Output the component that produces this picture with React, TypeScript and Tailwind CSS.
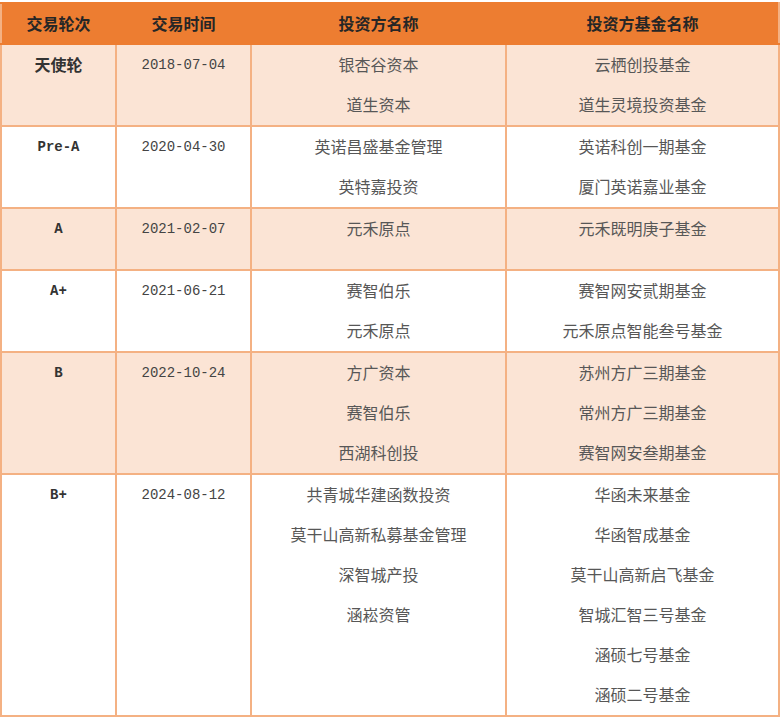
import React from "react";

type Round = {
  round: string;
  date: string;
  investors: string[];
  funds: string[];
};

const rounds: Round[] = [
  { round: "天使轮", date: "2018-07-04", investors: ["银杏谷资本", "道生资本"], funds: ["云栖创投基金", "道生灵境投资基金"] },
  { round: "Pre-A", date: "2020-04-30", investors: ["英诺昌盛基金管理", "英特嘉投资"], funds: ["英诺科创一期基金", "厦门英诺嘉业基金"] },
  { round: "A", date: "2021-02-07", investors: ["元禾原点"], funds: ["元禾既明庚子基金"] },
  { round: "A+", date: "2021-06-21", investors: ["赛智伯乐", "元禾原点"], funds: ["赛智网安贰期基金", "元禾原点智能叁号基金"] },
  { round: "B", date: "2022-10-24", investors: ["方广资本", "赛智伯乐", "西湖科创投"], funds: ["苏州方广三期基金", "常州方广三期基金", "赛智网安叁期基金"] },
  {
    round: "B+",
    date: "2024-08-12",
    investors: ["共青城华建函数投资", "莫干山高新私募基金管理", "深智城产投", "涵崧资管"],
    funds: ["华函未来基金", "华函智成基金", "莫干山高新启飞基金", "智城汇智三号基金", "涵硕七号基金", "涵硕二号基金"],
  },
];

const cjk = "font-['Noto_Sans_CJK_SC',sans-serif]";
const mono = "font-['Liberation_Mono','Noto_Sans_CJK_SC',monospace]";

function Lines({ items, latin = false }: { items: string[]; latin?: boolean }) {
  return (
    <div className="min-h-[60px]">
      {items.map((t) => (
        <div
          key={t}
          className={`flex h-10 items-center justify-center whitespace-nowrap ${latin ? "pt-[1px]" : "pb-[2px]"}`}
        >
          {t}
        </div>
      ))}
    </div>
  );
}

export default function App() {
  return (
    <div className="min-h-[720px] w-[784px] bg-white pt-[2px]">
      <table className="w-[778px] table-fixed border-collapse text-[16px] text-[#575757]">
        <colgroup>
          <col className="w-[115px]" />
          <col className="w-[135px]" />
          <col className="w-[255px]" />
          <col className="w-[273px]" />
        </colgroup>
        <thead>
          <tr className={`h-[41px] bg-[#ed7d31] text-[#262626] ${cjk}`}>
            <th className="border-2 border-[#ed7d31] border-l-[#f4b183] pb-[2px] font-bold">交易轮次</th>
            <th className="border-2 border-[#ed7d31] pb-[2px] font-bold">交易时间</th>
            <th className="border-2 border-[#ed7d31] pb-[2px] font-bold">投资方名称</th>
            <th className="border-2 border-[#ed7d31] border-r-[#f4b183] pb-[2px] font-bold">投资方基金名称</th>
          </tr>
        </thead>
        <tbody>
          {rounds.map((r, i) => {
            const ascii = /^[\x00-\x7f]+$/.test(r.round);
            return (
              <tr key={r.round} className={i % 2 === 0 ? "bg-[#fbe4d5]" : "bg-white"}>
                <td
                  className={`border-2 border-[#f4b183] p-0 align-top font-bold text-[#333] ${
                    ascii ? `${mono} text-[14px]` : `${cjk} text-[16px]`
                  }`}
                >
                  <Lines items={[r.round]} latin={ascii} />
                </td>
                <td className={`border-2 border-[#f4b183] p-0 align-top text-[14px] text-[#444] ${mono}`}>
                  <Lines items={[r.date]} latin />
                </td>
                <td className={`border-2 border-[#f4b183] p-0 align-top ${cjk}`}>
                  <Lines items={r.investors} />
                </td>
                <td className={`border-2 border-[#f4b183] p-0 align-top ${cjk}`}>
                  <Lines items={r.funds} />
                </td>
              </tr>
            );
          })}
        </tbody>
      </table>
    </div>
  );
}
